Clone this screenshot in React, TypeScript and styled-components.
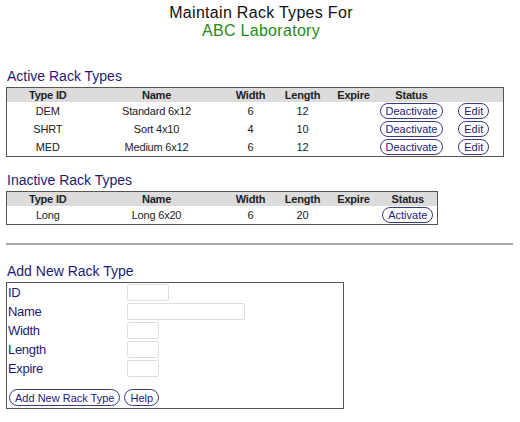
import React from "react";
import styled, { createGlobalStyle } from "styled-components";

const Global = createGlobalStyle`
  html, body { margin: 0; padding: 0; background: #fff; }
  body { font-family: "Liberation Sans", Arial, sans-serif; }
`;

const Page = styled.div`
  width: 520px;
  padding: 4px 6px 0 6px;
  box-sizing: border-box;
  display: flex;
  flex-direction: column;
`;

const TitleBlock = styled.div`
  display: flex;
  flex-direction: column;
  align-items: center;
  font-size: 16px;
  line-height: 18px;
  letter-spacing: 0.3px;
  margin-left: 2px;
`;

const TitleLine = styled.div<{ $green?: boolean }>`
  color: ${(p) => (p.$green ? "#1e8c1e" : "#111")};
`;

const Heading = styled.div<{ $top: number }>`
  margin-top: ${(p) => p.$top}px;
  margin-bottom: 2px;
  padding-left: 1px;
  font-size: 14px;
  line-height: 17px;
  color: #1c1c78;
`;

const Table = styled.table<{ $width: number }>`
  width: ${(p) => p.$width}px;
  border-collapse: collapse;
  border: 1px solid #555;
  table-layout: fixed;
  font-size: 11px;
  letter-spacing: -0.2px;
  color: #222;
`;

const HeadRow = styled.tr`
  background: #dcdcdc;
`;

const Th = styled.th`
  height: 14px;
  padding: 0;
  font-weight: bold;
  text-align: center;
  line-height: 14px;
`;

const Td = styled.td`
  height: 18px;
  padding: 0;
  text-align: center;
  vertical-align: middle;
  line-height: 14px;
`;

const PillButton = styled.button`
  font-family: "Liberation Sans", Arial, sans-serif;
  font-size: 11px;
  letter-spacing: 0;
  color: #23237a;
  background: #fff;
  border: 1.5px solid #3a3a88;
  border-radius: 9px;
  height: 16px;
  padding: 0 5px;
  line-height: 12px;
  cursor: pointer;
  vertical-align: middle;
`;

const Rule = styled.div`
  margin-top: 18px;
  height: 2px;
  width: 507px;
  background: #a8a8a8;
`;

const FormBox = styled.div`
  width: 338px;
  border: 1px solid #555;
  box-sizing: border-box;
  padding: 0 0 2px 1px;
  display: flex;
  flex-direction: column;
`;

const FieldRow = styled.div`
  display: grid;
  grid-template-columns: 119px 1fr;
  align-items: center;
  height: 19px;
`;

const Label = styled.label`
  font-size: 13px;
  letter-spacing: -0.3px;
  color: #1c1c78;
  line-height: 19px;
`;

const Input = styled.input<{ $w: number }>`
  width: ${(p) => p.$w}px;
  height: 17px;
  box-sizing: border-box;
  border: 1px solid #dedede;
  border-radius: 2px;
  padding: 0;
  margin: 0;
`;

const ButtonRow = styled.div`
  display: flex;
  gap: 4px;
  margin-top: 11px;
  padding-left: 1px;
  & > button {
    height: 17px;
  }
`;

const activeRows = [
  { id: "DEM", name: "Standard 6x12", w: "6", l: "12" },
  { id: "SHRT", name: "Sort 4x10", w: "4", l: "10" },
  { id: "MED", name: "Medium 6x12", w: "6", l: "12" },
];

const cols = [82, 136, 52, 52, 50, 66];

export default function App() {
  return (
    <>
      <Global />
      <Page>
        <TitleBlock>
          <TitleLine>Maintain Rack Types For</TitleLine>
          <TitleLine $green>ABC Laboratory</TitleLine>
        </TitleBlock>

        <Heading $top={28}>Active Rack Types</Heading>
        <Table $width={497}>
          <colgroup>
            {cols.map((c, i) => (
              <col key={i} style={{ width: c }} />
            ))}
            <col style={{ width: 59 }} />
          </colgroup>
          <thead>
            <HeadRow>
              <Th>Type ID</Th>
              <Th>Name</Th>
              <Th>Width</Th>
              <Th>Length</Th>
              <Th>Expire</Th>
              <Th>Status</Th>
              <Th></Th>
            </HeadRow>
          </thead>
          <tbody>
            {activeRows.map((r) => (
              <tr key={r.id}>
                <Td>{r.id}</Td>
                <Td>{r.name}</Td>
                <Td>{r.w}</Td>
                <Td>{r.l}</Td>
                <Td></Td>
                <Td>
                  <PillButton>Deactivate</PillButton>
                </Td>
                <Td>
                  <PillButton>Edit</PillButton>
                </Td>
              </tr>
            ))}
          </tbody>
        </Table>

        <Heading $top={15}>Inactive Rack Types</Heading>
        <Table $width={431}>
          <colgroup>
            {cols.slice(0, 5).map((c, i) => (
              <col key={i} style={{ width: c }} />
            ))}
            <col style={{ width: 59 }} />
          </colgroup>
          <thead>
            <HeadRow>
              <Th>Type ID</Th>
              <Th>Name</Th>
              <Th>Width</Th>
              <Th>Length</Th>
              <Th>Expire</Th>
              <Th>Status</Th>
            </HeadRow>
          </thead>
          <tbody>
            <tr>
              <Td>Long</Td>
              <Td>Long 6x20</Td>
              <Td>6</Td>
              <Td>20</Td>
              <Td></Td>
              <Td>
                <PillButton>Activate</PillButton>
              </Td>
            </tr>
          </tbody>
        </Table>

        <Rule />

        <Heading $top={18}>Add New Rack Type</Heading>
        <FormBox>
          <FieldRow>
            <Label>ID</Label>
            <Input $w={42} />
          </FieldRow>
          <FieldRow>
            <Label>Name</Label>
            <Input $w={118} />
          </FieldRow>
          <FieldRow>
            <Label>Width</Label>
            <Input $w={32} />
          </FieldRow>
          <FieldRow>
            <Label>Length</Label>
            <Input $w={32} />
          </FieldRow>
          <FieldRow>
            <Label>Expire</Label>
            <Input $w={32} />
          </FieldRow>
          <ButtonRow>
            <PillButton>Add New Rack Type</PillButton>
            <PillButton>Help</PillButton>
          </ButtonRow>
        </FormBox>
      </Page>
    </>
  );
}
